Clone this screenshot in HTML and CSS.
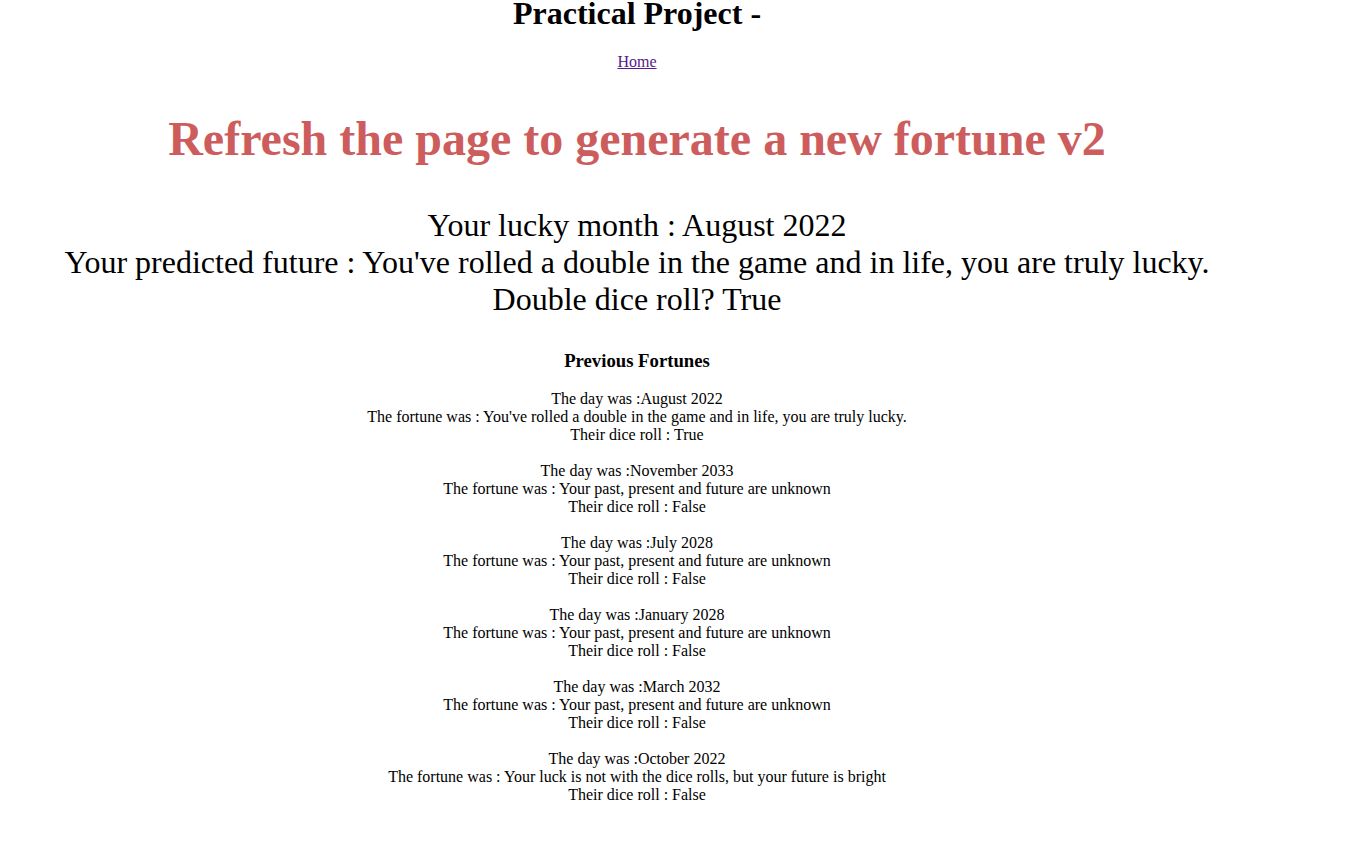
FILE: index.html
```html
<!DOCTYPE html>
<html>
<head>
<meta charset="utf-8">
<link rel="stylesheet" href="styles.css">
</head>
<body>
<div class="page">
  <h1 class="title">Practical Project -</h1>
  <p class="nav"><a class="nav-link" href="#">Home</a></p>
  <h2 class="headline">Refresh the page to generate a new fortune v2</h2>
  <div class="fortune">
    <div>Your lucky month : August 2022</div>
    <div>Your predicted future : You've rolled a double in the game and in life, you are truly lucky.</div>
    <div>Double dice roll? True</div>
  </div>
  <h3 class="prev-title">Previous Fortunes</h3>
  <div class="prev-list">
    <div class="entry">The day was :August 2022<br>The fortune was : You've rolled a double in the game and in life, you are truly lucky.<br>Their dice roll : True</div>
    <div class="entry">The day was :November 2033<br>The fortune was : Your past, present and future are unknown<br>Their dice roll : False</div>
    <div class="entry">The day was :July 2028<br>The fortune was : Your past, present and future are unknown<br>Their dice roll : False</div>
    <div class="entry">The day was :January 2028<br>The fortune was : Your past, present and future are unknown<br>Their dice roll : False</div>
    <div class="entry">The day was :March 2032<br>The fortune was : Your past, present and future are unknown<br>Their dice roll : False</div>
    <div class="entry">The day was :October 2022<br>The fortune was : Your luck is not with the dice rolls, but your future is bright<br>Their dice roll : False</div>
  </div>
</div>
</body>
</html>
```
FILE: styles.css
```css
html, body {
  margin: 0;
  padding: 0;
  background: #ffffff;
}
body {
  font-family: "Liberation Serif", "Times New Roman", serif;
  color: #000000;
  overflow: hidden;
}
.page {
  width: 1274px;
  text-align: center;
}
.title {
  font-size: 32px;
  font-weight: bold;
  line-height: 27px;
  margin: 0;
}
.nav {
  font-size: 16px;
  line-height: 18px;
  margin: 26px 0 0;
}
.nav-link {
  color: #551a8b;
  text-decoration: underline;
}
.headline {
  font-size: 48px;
  font-weight: bold;
  line-height: 55px;
  color: #cd5c5c;
  margin: 40px 0 0;
}
.fortune {
  font-size: 32px;
  line-height: 37px;
  margin-top: 41px;
}
.prev-title {
  font-size: 18.72px;
  font-weight: bold;
  line-height: 22px;
  margin: 32px 0 0;
}
.prev-list {
  margin-top: 18px;
  font-size: 16px;
  line-height: 18px;
}
.entry {
  margin-bottom: 18px;
}
```
